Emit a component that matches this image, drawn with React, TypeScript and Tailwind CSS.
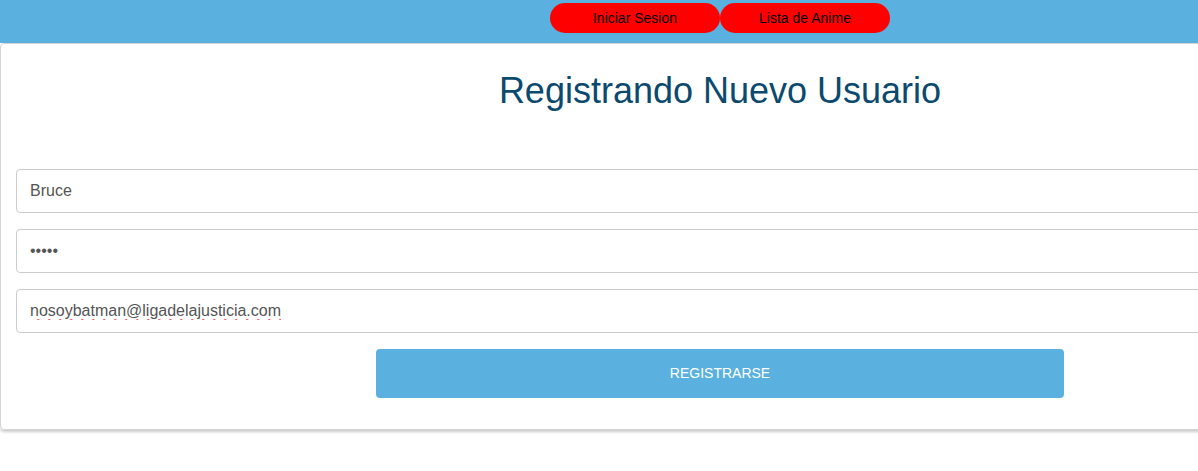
export default function App() {
  return (
    <div className="w-[1198px] h-[471px] overflow-hidden bg-white font-['Liberation_Sans',Arial,sans-serif]">
      <div className="w-[1440px]">
        {/* Navbar */}
        <nav className="h-[43px] bg-[#5ab1df] flex justify-center items-start pt-[3px]">
          <button className="w-[170px] h-[30px] rounded-full bg-[#ff0000] text-black text-[14px]">
            Iniciar Sesion
          </button>
          <button className="w-[170px] h-[30px] rounded-full bg-[#ff0000] text-black text-[14px]">
            Lista de Anime
          </button>
        </nav>

        {/* Card */}
        <div className="border border-[#d4d4d4] rounded-[4px] shadow-[0_2px_3px_rgba(0,0,0,0.2)] px-[15px] pb-[31px]">
          <h1 className="text-center text-[36px] text-[#0b4a6e] pt-[27px] leading-[40px]">
            Registrando Nuevo Usuario
          </h1>
          <form className="mt-[58px] flex flex-col gap-4">
            <input
              defaultValue="Bruce"
              className="h-[44px] border border-[#ccc] rounded-[4px] px-[13px] text-[16px] text-[#555] outline-none"
            />
            <input
              type="password"
              defaultValue="Bruce"
              className="h-[44px] border border-[#ccc] rounded-[4px] px-[13px] text-[16px] text-[#555] outline-none"
            />
            <input
              defaultValue="nosoybatman@ligadelajusticia.com"
              className="h-[44px] border border-[#ccc] rounded-[4px] px-[13px] text-[16px] text-[#555] outline-none underline decoration-wavy decoration-red-600 decoration-[1.5px] underline-offset-[3px]"
            />
            <button
              type="button"
              className="self-center w-[688px] h-[49px] rounded-[4px] bg-[#5ab1df] text-white text-[14px]"
            >
              REGISTRARSE
            </button>
          </form>
        </div>
      </div>
    </div>
  )
}
